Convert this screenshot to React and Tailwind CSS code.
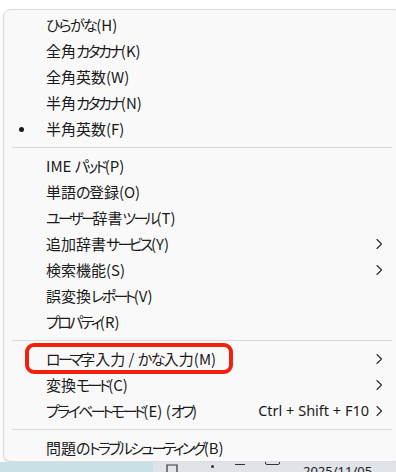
import React from 'react';

const Chevron = () => (
  <svg width="8" height="12" viewBox="0 0 8 12" fill="none" className="shrink-0">
    <path d="M2 1.5 L6.5 6 L2 10.5" stroke="#2b2b2b" strokeWidth="1.1" strokeLinecap="round" strokeLinejoin="round" />
  </svg>
);

const groups = [
  [
    { label: 'ひらがな(H)' },
    { label: '全角カタカナ(K)' },
    { label: '全角英数(W)' },
    { label: '半角カタカナ(N)' },
    { label: '半角英数(F)', checked: true },
  ],
  [
    { label: 'IME パッド(P)' },
    { label: '単語の登録(O)' },
    { label: 'ユーザー辞書ツール(T)' },
    { label: '追加辞書サービス(Y)', sub: true },
    { label: '検索機能(S)', sub: true },
    { label: '誤変換レポート(V)' },
    { label: 'プロパティ(R)' },
  ],
  [
    { label: 'ローマ字入力 / かな入力(M)', sub: true, marked: true },
    { label: '変換モード(C)', sub: true },
    { label: 'プライベートモード(E) (オフ)', sub: true, shortcut: 'Ctrl + Shift + F10' },
  ],
  [
    { label: '問題のトラブルシューティング(B)' },
  ],
];

// Yu Gothic UI has narrow kana; squeeze kana runs so widths line up
const kanaClass = (part) => {
  if (part === 'ー') return 'tracking-[-3.5px]';
  if (/[\u30a0-\u30ff]/.test(part)) return 'tracking-[-2.6px]';
  if (/[\u3040-\u309f]/.test(part)) return 'tracking-[-1.6px]';
  return '';
};

const Label = ({ text }) => (
  <span className="flex-1 whitespace-nowrap [font-feature-settings:'palt']">
    {text.split(/(ー|[\u3040-\u309f]+|[\u30a0-\u30fb\u30fd-\u30ff]+)/).filter(Boolean).map((part, i) => (
      <span key={i} className={kanaClass(part)}>{part}</span>
    ))}
  </span>
);

const MenuItem = ({ item }) => (
  <div className="relative flex items-center h-[26px] pr-[17px]">
    <div className="w-[42px] shrink-0 flex items-center pl-[15px]">
      {item.checked && <span className="block w-[5px] h-[5px] rounded-full bg-[#1b1b1b]" />}
    </div>
    <Label text={item.label} />
    {item.shortcut && (
      <span className="mr-[6px] font-['Noto_Sans','Noto_Sans_CJK_JP',sans-serif] text-[14.5px]">{item.shortcut}</span>
    )}
    {item.sub && <Chevron />}
    {item.marked && (
      <div className="absolute left-[21px] top-[-3px] w-[208px] h-[31px] border-[4px] border-[#f0200f] rounded-[9px]" />
    )}
  </div>
);

export default function App() {
  return (
    <div className="w-[396px] h-[472px] overflow-hidden bg-white flex flex-col font-['Noto_Sans_CJK_JP',sans-serif] text-[15px] text-[#1b1b1b]">
      <div className="flex-1 pt-[9px] pl-[3px]">
        <div className="w-[398px] h-[453px] bg-[#f9f9f9] border border-[#dcdcdc] rounded-[8px] shadow-sm pt-[2px]">
          {groups.map((group, gi) => (
            <div key={gi}>
              {gi > 0 && <div className="mx-[8px] my-[5px] h-px bg-[#d9d9d9]" />}
              {group.map((item, i) => (
                <MenuItem key={i} item={item} />
              ))}
            </div>
          ))}
        </div>
      </div>
      <div className="h-[10px] shrink-0 flex">
        <div className="w-[153px] bg-[#c9e0e6]" />
        <div className="flex-1 bg-[#e0e4e9] relative overflow-hidden">
          <svg className="absolute left-[12px] top-0" width="14" height="10" viewBox="0 0 14 10" fill="none">
            <path d="M2 10 L2 3 L12 3 L12 10" stroke="#333" strokeWidth="1.2" />
          </svg>
          <span className="absolute left-[58px] top-[3px] w-[3px] h-[3px] rounded-full bg-[#333]" />
          <span className="absolute left-[82px] top-[2px] w-[10px] h-[1px] bg-[#333]" />
          <span className="absolute left-[112px] top-[-4px] w-[15px] h-[7px] border border-[#333] rounded-[2px]" />
          <span className="absolute left-[150px] top-[1px] text-[13px] leading-[16px] text-[#222] font-['Noto_Sans',sans-serif]">2025/11/05</span>
        </div>
      </div>
    </div>
  );
}
